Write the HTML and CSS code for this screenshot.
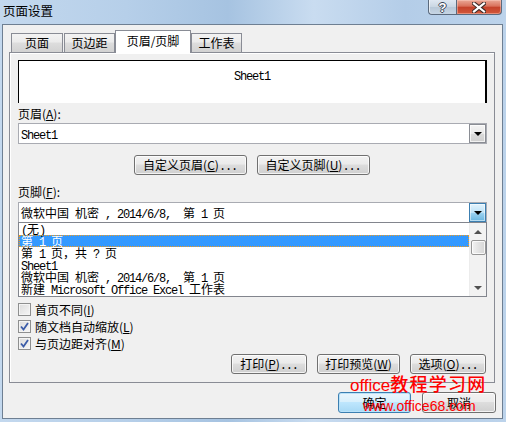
FILE: index.html
```html
<!DOCTYPE html>
<html lang="zh-CN">
<head>
<meta charset="utf-8">
<title>页面设置</title>
<link rel="stylesheet" href="styles.css">
</head>
<body>
<div class="window">
  <div class="titlebar">
    <div class="title">页面设置</div>
    <div class="caps">
      <div class="cap help"><span class="q">?</span></div>
      <div class="cap close">
        <svg width="14" height="11" viewBox="0 0 14 11">
          <path d="M2 1.5 L12 9.5 M12 1.5 L2 9.5" stroke="#3a2a28" stroke-width="4.2" stroke-linecap="square" fill="none"/>
          <path d="M2 1.5 L12 9.5 M12 1.5 L2 9.5" stroke="#ffffff" stroke-width="2.2" stroke-linecap="square" fill="none"/>
        </svg>
      </div>
    </div>
  </div>
  <div class="client">
    <div class="tabs">
      <div class="tab t1">页面</div>
      <div class="tab t2">页边距</div>
      <div class="tab sel">页眉/页脚</div>
      <div class="tab t4">工作表</div>
    </div>
    <div class="panel">
      <div class="preview"><span class="m">Sheet1</span></div>
      <div class="label">页眉(<u>A</u>):</div>
      <div class="combo">
        <div class="combo-text"><span class="m">Sheet1</span></div>
        <div class="dd"><i class="tri"></i></div>
      </div>
      <div class="btnrow center">
        <div class="btn w113">自定义页眉(<u>C</u>)<span class="m">...</span></div>
        <div class="btn w113">自定义页脚(<u>U</u>)<span class="m">...</span></div>
      </div>
      <div class="label l2">页脚(<u>F</u>):</div>
      <div class="combo">
        <div class="combo-text">微软中国<span class="m"> </span>机密<span class="m"> , 2014/6/8,  </span>第<span class="m"> 1 </span>页</div>
        <div class="dd hot"><i class="tri"></i></div>
      </div>
      <div class="listbox">
        <div class="items">
          <div class="item"><span class="m">(</span>无<span class="m">)</span></div>
          <div class="item selected">第<span class="m"> 1 </span>页</div>
          <div class="item">第<span class="m"> 1 </span>页，共<span class="m"> ? </span>页</div>
          <div class="item"><span class="m">Sheet1</span></div>
          <div class="item">微软中国<span class="m"> </span>机密<span class="m"> , 2014/6/8,  </span>第<span class="m"> 1 </span>页</div>
          <div class="item">新建<span class="m"> Microsoft Office Excel </span>工作表</div>
        </div>
        <div class="vscroll">
          <div class="arrow up"></div>
          <div class="thumb"></div>
          <div class="track"></div>
          <div class="arrow down"></div>
        </div>
      </div>
      <div class="checks">
        <div class="check"><span class="box"></span><span>首页不同(<u>I</u>)</span></div>
        <div class="check"><span class="box on"><svg width="9" height="9" viewBox="0 0 9 9"><path d="M1 4.5 L3.5 7.5 L8 1" stroke="#3b5ca8" stroke-width="1.8" fill="none"/></svg></span><span>随文档自动缩放(<u>L</u>)</span></div>
        <div class="check"><span class="box on"><svg width="9" height="9" viewBox="0 0 9 9"><path d="M1 4.5 L3.5 7.5 L8 1" stroke="#3b5ca8" stroke-width="1.8" fill="none"/></svg></span><span>与页边距对齐(<u>M</u>)</span></div>
      </div>
      <div class="btnrow right">
        <div class="btn w76">打印(<u>P</u>)<span class="m">...</span></div>
        <div class="btn w83">打印预览(<u>W</u>)</div>
        <div class="btn w76">选项(<u>O</u>)<span class="m">...</span></div>
      </div>
    </div>
    <div class="dlgbtns">
      <div class="btn def w73">确定</div>
      <div class="btn w74">取消</div>
    </div>
  </div>
  <div class="watermark">
    <div class="wm1">office<span class="cj">教程学习网</span></div>
    <div class="wm2">www.office68.com</div>
  </div>
</div>
</body>
</html>
```
FILE: styles.css
```css
* { box-sizing: border-box; }
html, body { margin: 0; padding: 0; }
body {
  width: 506px;
  height: 422px;
  overflow: hidden;
  font-family: "Noto Sans CJK SC", "Noto Sans", sans-serif;
  font-size: 12px;
  color: #000;
}
.m {
  font-family: "Liberation Mono", "DejaVu Sans Mono", monospace;
  letter-spacing: -1.2px;
  font-size: 12px;
  white-space: pre;
}
u { text-decoration: underline; text-underline-offset: 1px; }

.window {
  position: relative;
  width: 506px;
  height: 422px;
  background: linear-gradient(to right, #c3d8ee 0%, #b6cfe9 25%, #a6c3e1 45%, #c9dcf0 62%, #b4cde8 80%, #bcd3eb 100%);
  display: flex;
  flex-direction: column;
}
.titlebar {
  height: 24px;
  display: flex;
  justify-content: space-between;
  align-items: flex-start;
}
.title {
  padding: 3px 0 0 3px;
  font-size: 12.5px;
  line-height: 16px;
  color: #000;
}
.caps {
  display: flex;
  margin-right: 4px;
}
.cap {
  height: 15px;
  border: 1px solid #5b6a7d;
  border-top: none;
  display: flex;
  align-items: center;
  justify-content: center;
}
.help {
  width: 28px;
  border-right: none;
  border-bottom-left-radius: 4px;
  background: linear-gradient(#dfe8f2, #c9d6e3 50%, #b8c8d8 51%, #c6d5e4);
  box-shadow: inset 1px 0 0 rgba(255,255,255,.6);
}
.q {
  font-family: "Liberation Sans", sans-serif;
  font-weight: bold;
  font-size: 13px;
  line-height: 13px;
  color: #fff;
  text-shadow: 1px 0 0 #3b4656, -1px 0 0 #3b4656, 0 1px 0 #3b4656, 0 -1px 0 #3b4656;
}
.close {
  width: 46px;
  border-bottom-right-radius: 4px;
  background: linear-gradient(#eaa896, #d9705a 45%, #c4412a 50%, #d2583b 100%);
  box-shadow: inset 0 0 0 1px rgba(255,210,200,.45);
}
.close svg { display: block; }

.client {
  margin-left: 2px;
  width: 501px;
  height: 395px;
  border: 1px solid #6e7f92;
  background: #f0f0f0;
  position: relative;
}

.tabs {
  display: flex;
  align-items: flex-end;
  height: 22px;
  margin: 5px 0 0 8px;
}
.tab {
  height: 19px;
  border: 1px solid #898c95;
  border-bottom: none;
  background: linear-gradient(#f3f3f3, #ebebeb 45%, #dddddd 50%, #d2d2d2);
  text-align: center;
  line-height: 18px;
  font-size: 12px;
}
.t1 { width: 52px; }
.t2 { width: 51px; margin-left: 1px; }
.t4 { width: 51px; }
.sel {
  width: 76px;
  height: 23px;
  margin-bottom: -1px;
  background: #ffffff;
  line-height: 20px;
  position: relative;
  z-index: 2;
}

.panel {
  position: relative;
  z-index: 1;
  margin-left: 6px;
  width: 486px;
  height: 331px;
  border: 1px solid #898c95;
  padding: 7px 7px 0 8px;
  background: #f0f0f0;
  box-shadow: inset 1px 1px 0 #ffffff;
}
.preview {
  height: 43px;
  background: #fff;
  border-top: 1px solid #000;
  border-left: 1px solid #000;
  border-right: 2px solid #000;
  text-align: center;
  padding-top: 7px;
  line-height: 14px;
}
.label {
  margin-top: 3px;
  height: 16px;
  line-height: 16px;
}
.l2 { margin-top: 9px; }
.combo {
  margin-top: 1px;
  height: 21px;
  border: 1px solid #a9abb2;
  background: #fff;
  display: flex;
  justify-content: space-between;
  align-items: stretch;
}
.l2 + .combo { margin-top: 2px; }
.combo-text {
  padding-left: 2px;
  line-height: 19px;
  white-space: nowrap;
}
.dd {
  width: 17px;
  border: 1px solid #8a8d94;
  background: linear-gradient(#f4f4f4, #e9e9e9 50%, #dadada 51%, #cfcfcf);
  display: flex;
  align-items: center;
  justify-content: center;
  box-shadow: inset 0 0 0 1px rgba(255,255,255,.7);
}
.dd.hot {
  border-color: #3c7fb1;
  background: linear-gradient(#e3f3fc, #bfe3f7 50%, #9dd3f1 51%, #6ab6e0);
  box-shadow: inset 0 0 0 1px rgba(255,255,255,.5);
}
.tri {
  width: 0;
  height: 0;
  border-left: 4px solid transparent;
  border-right: 4px solid transparent;
  border-top: 4px solid #000;
  margin-top: 1px;
}

.btnrow {
  margin-top: 11px;
  height: 20px;
  display: flex;
  gap: 10px;
}
.btnrow.center { justify-content: center; padding-right: 2px; }
.btnrow.right { justify-content: flex-end; margin-top: 2px; padding-right: 1px; gap: 10px; }
.btn {
  height: 20px;
  border: 1px solid #707070;
  border-radius: 3px;
  background: linear-gradient(#f2f2f2, #ebebeb 45%, #dddddd 50%, #cfcfcf);
  box-shadow: inset 0 0 0 1px rgba(255,255,255,.75);
  text-align: center;
  line-height: 18px;
  font-size: 12px;
  white-space: nowrap;
}
.w113 { width: 113px; }
.w76 { width: 76px; }
.w83 { width: 83px; }
.w73 { width: 73px; }
.w74 { width: 74px; }
.btn.def {
  border-color: #3c7fb1;
  background: linear-gradient(#eaf6fd, #d9f0fc 45%, #bee6fd 50%, #a7d9f5);
  box-shadow: inset 0 0 0 1px #b9e2f9;
}

.listbox {
  margin-top: -1px;
  height: 75px;
  border: 1px solid #82858d;
  background: #fff;
  display: flex;
}
.items {
  width: 451px;
}
.item {
  height: 12px;
  line-height: 12px;
  padding-left: 2px;
  white-space: nowrap;
}
.item.selected {
  background: #3399ff;
  color: #fff;
  outline: 1px dotted #f39c1c;
  outline-offset: -1px;
}
.vscroll {
  width: 17px;
  background: #f2f2f2;
  border-left: 1px solid #ececec;
  display: flex;
  flex-direction: column;
  align-items: center;
}
.arrow {
  height: 17px;
  width: 15px;
  display: flex;
  align-items: center;
  justify-content: center;
}
.arrow::after {
  content: "";
  border-left: 4px solid transparent;
  border-right: 4px solid transparent;
}
.arrow.up::after { border-bottom: 4px solid #505050; }
.arrow.down::after { border-top: 4px solid #505050; }
.thumb {
  width: 15px;
  height: 15px;
  border: 1px solid #979797;
  border-radius: 2px;
  background: linear-gradient(to right, #f3f3f3, #e3e3e3 50%, #d6d6d6);
  box-shadow: inset 0 0 0 1px rgba(255,255,255,.8);
}
.track { flex: 1; }

.checks {
  margin-top: 4px;
}
.check {
  height: 17px;
  display: flex;
  align-items: center;
  gap: 4px;
}
.box {
  width: 13px;
  height: 13px;
  border: 1px solid #8e8f8f;
  background: linear-gradient(135deg, #dcdcdc, #f6f6f6);
  box-shadow: inset 0 0 0 1px #f4f4f4;
  display: flex;
  align-items: center;
  justify-content: center;
}
.box svg { display: block; }

.dlgbtns {
  margin: 9px 0 0 6px;
  width: 487px;
  display: flex;
  justify-content: flex-end;
  gap: 11px;
}
.dlgbtns .btn { height: 21px; line-height: 19px; }

.watermark {
  position: absolute;
  left: 350px;
  top: 372px;
  color: #ff0000;
  pointer-events: none;
  z-index: 5;
}
.wm1 {
  font-family: "Liberation Sans", sans-serif;
  font-size: 17px;
  line-height: 22px;
  white-space: nowrap;
}
.wm1 .cj {
  font-family: "Noto Sans CJK SC", sans-serif;
  font-size: 18px;
  font-weight: 500;
  letter-spacing: 1.2px;
}
.wm2 {
  margin: 0 0 0 13px;
  font-family: "Liberation Sans", sans-serif;
  font-size: 14px;
  line-height: 18px;
  white-space: nowrap;
}
```
